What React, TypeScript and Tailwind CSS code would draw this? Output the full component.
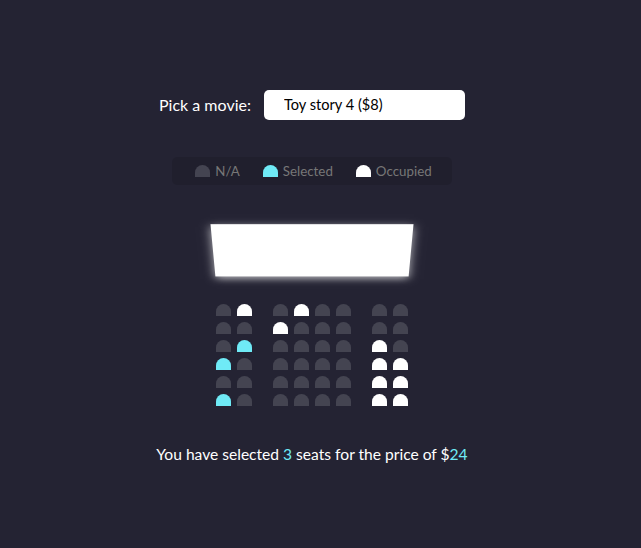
import React, { useState } from "react";

type SeatState = "na" | "selected" | "occupied";

const layout: SeatState[][] = [
  ["na", "occupied", "na", "occupied", "na", "na", "na", "na"],
  ["na", "na", "occupied", "na", "na", "na", "na", "na"],
  ["na", "selected", "na", "na", "na", "na", "occupied", "na"],
  ["selected", "na", "na", "na", "na", "na", "occupied", "occupied"],
  ["na", "na", "na", "na", "na", "na", "occupied", "occupied"],
  ["selected", "na", "na", "na", "na", "na", "occupied", "occupied"],
];

const movies = [
  { name: "Avengers: Endgame", price: 10 },
  { name: "Joker", price: 12 },
  { name: "Toy story 4", price: 8 },
  { name: "The Lion King", price: 9 },
];

const seatColor = (s: SeatState) =>
  s === "selected" ? "bg-[#6feaf6]" : s === "occupied" ? "bg-white" : "bg-[#444451]";

const Seat = ({ state, className = "", onClick }: { state: SeatState; className?: string; onClick?: () => void }) => (
  <div
    onClick={onClick}
    className={`h-[12px] w-[15px] m-[3px] rounded-t-[10px] ${seatColor(state)} ${className}`}
  />
);

export default function App() {
  const [seats, setSeats] = useState(layout);
  const [movie, setMovie] = useState(2);

  const toggle = (r: number, c: number) => {
    if (seats[r][c] === "occupied") return;
    setSeats(seats.map((row, ri) =>
      row.map((s, ci) => (ri === r && ci === c ? (s === "selected" ? "na" : "selected") : s))
    ));
  };

  const count = seats.flat().filter((s) => s === "selected").length;
  const price = count * movies[movie].price;

  return (
    <div className="min-h-screen bg-[#242333] text-white flex flex-col items-center justify-center pr-[17px] pb-[6px] font-['Lato',sans-serif]">
      <div className="flex items-center my-[20px] text-[16px]">
        <label>Pick a movie:</label>
        <select
          value={movie}
          onChange={(e) => setMovie(Number(e.target.value))}
          className="ml-[13px] w-[201px] h-[30px] bg-white text-black text-[14.6px] rounded-[5px] pl-[20px] pr-[15px] appearance-none outline-none"
        >
          {movies.map((m, i) => (
            <option key={m.name} value={i}>{m.name} (${m.price})</option>
          ))}
        </select>
      </div>

      <ul className="mt-[17px] mb-[16px] flex justify-between bg-black/10 px-[10px] py-[5px] rounded-[5px] text-[#777]">
        <li className="flex items-center mx-[10px]">
          <Seat state="na" />
          <small className="ml-[2px] text-[13.33px] leading-[18px]">N/A</small>
        </li>
        <li className="flex items-center mx-[10px]">
          <Seat state="selected" />
          <small className="ml-[2px] text-[13.33px] leading-[18px]">Selected</small>
        </li>
        <li className="flex items-center mx-[10px]">
          <Seat state="occupied" />
          <small className="ml-[2px] text-[13.33px] leading-[18px]">Occupied</small>
        </li>
      </ul>

      <div className="[perspective:1000px] mb-[29px]">
        <div className="bg-white h-[70px] w-full my-[15px] [transform:rotateX(-45deg)] shadow-[0_3px_10px_rgba(255,255,255,0.7)]" />
        {seats.map((row, r) => (
          <div key={r} className="flex">
            {row.map((s, c) => (
              <Seat
                key={c}
                state={s}
                onClick={() => toggle(r, c)}
                className={c === 1 ? "mr-[18px]" : c === 6 ? "ml-[18px]" : ""}
              />
            ))}
          </div>
        ))}
      </div>

      <p className="my-[5px] text-[15.6px]">
        You have selected <span className="text-[#6feaf6]">{count}</span> seats for the price of $
        <span className="text-[#6feaf6]">{price}</span>
      </p>
    </div>
  );
}
